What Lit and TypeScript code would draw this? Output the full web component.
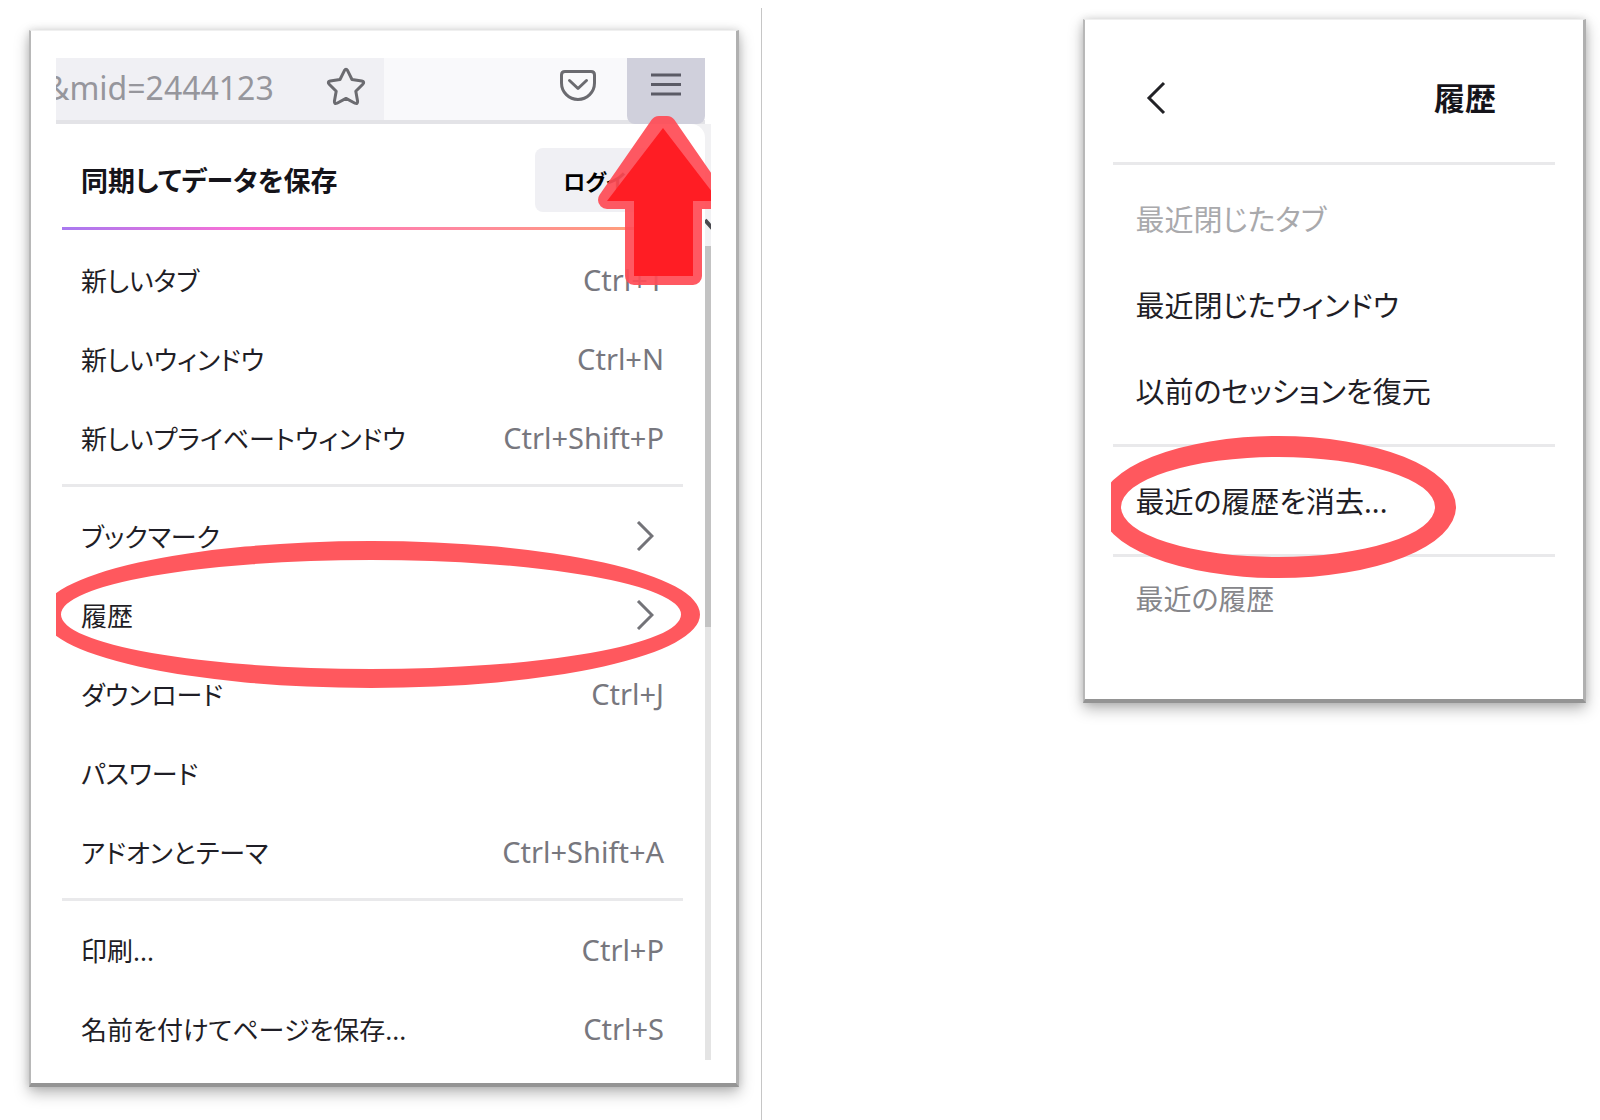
import { LitElement, html, css, nothing } from "lit";
import { customElement } from "lit/decorators.js";

interface MenuEntry {
  label: string;
  shortcut?: string;
  submenu?: boolean;
  ringed?: boolean;
}

const MENU_GROUPS: MenuEntry[][] = [
  [
    { label: "新しいタブ", shortcut: "Ctrl+T" },
    { label: "新しいウィンドウ", shortcut: "Ctrl+N" },
    { label: "新しいプライベートウィンドウ", shortcut: "Ctrl+Shift+P" },
  ],
  [
    { label: "ブックマーク", submenu: true },
    { label: "履歴", submenu: true, ringed: true },
    { label: "ダウンロード", shortcut: "Ctrl+J" },
    { label: "パスワード" },
    { label: "アドオンとテーマ", shortcut: "Ctrl+Shift+A" },
  ],
  [
    { label: "印刷...", shortcut: "Ctrl+P" },
    { label: "名前を付けてページを保存...", shortcut: "Ctrl+S" },
  ],
];

const shared = css`
  * {
    box-sizing: border-box;
  }
  button {
    font: inherit;
    color: inherit;
    background: none;
    border: 0;
    margin: 0;
    padding: 0;
    text-align: left;
    cursor: pointer;
  }
  svg {
    display: block;
    flex: none;
  }
  .card {
    background: #fff;
    border-style: solid;
    border-width: 1px 3px 4px 2px;
    border-color: #f0f0f0 #b0b0b0 #949494 #b8b8b8;
    box-shadow: 0 6px 14px rgba(0, 0, 0, 0.28), 0 0 8px rgba(0, 0, 0, 0.12);
  }
  .rule {
    height: 3px;
    border: 0;
    background: #e9e9eb;
  }
  .ring {
    position: absolute;
    z-index: 2;
    border-style: solid;
    border-color: #ff585e;
    border-radius: 50%;
    pointer-events: none;
  }
`;

@customElement("app-menu")
export class AppMenu extends LitElement {
  static styles = [
    shared,
    css`
      :host {
        display: block;
      }
      .card {
        padding: 27px 25px 23px 25px;
      }
      .panel {
        position: relative;
        overflow: hidden;
      }
      .toolbar {
        display: flex;
        height: 66px;
        margin-right: 6px;
        background: #f9f9fb;
        border-bottom: 4px solid #e3e3e7;
      }
      .address {
        display: flex;
        align-items: center;
        justify-content: space-between;
        flex: 0 1 328px;
        padding: 0 18px 4px 0;
        background: #f0f0f4;
        overflow: hidden;
      }
      .url {
        margin-left: -10px;
        font-size: 32px;
        color: #96969c;
      }
      .tools {
        display: flex;
        flex: 1;
        justify-content: flex-end;
        padding: 10px 30px 0 0;
      }
      .opener {
        position: relative;
        z-index: 3;
        flex: none;
        width: 78px;
      }
      .opener button {
        display: flex;
        justify-content: center;
        width: 100%;
        height: 66px;
        padding-top: 14px;
        background: #d0d0dc;
        border-radius: 0 0 8px 8px;
      }
      .arrow {
        position: absolute;
        top: 58px;
        left: -34px;
      }
      .body {
        display: flex;
        background: #f1f1f3;
      }
      .list {
        flex: 1;
        min-width: 0;
        background: #fff;
        border-radius: 0 14px 0 0;
      }
      .sync {
        display: flex;
        align-items: center;
        justify-content: space-between;
        height: 103px;
        padding: 8px 22px 0 25px;
      }
      .title {
        margin: 0;
        font-size: 27px;
        font-weight: 700;
        color: #15141a;
      }
      .login {
        width: 148px;
        height: 64px;
        padding-left: 28px;
        border-radius: 8px;
        background: #f0f0f4;
        font-size: 22px;
        font-weight: 700;
      }
      .accent {
        height: 3px;
        margin: 0 22px 10px 6px;
        background: linear-gradient(90deg, #a879f0, #f770d6 28%, #ff7fb0 50%, #ff9a80 88%, #ffb070);
      }
      .rule {
        margin: 7px 22px 9px 6px;
      }
      .slot {
        position: relative;
      }
      .slot.last {
        margin-bottom: -8px;
      }
      .row {
        display: flex;
        align-items: center;
        justify-content: space-between;
        width: 100%;
        height: 79px;
        padding: 0 41px 0 25px;
        font-size: 26px;
        color: #1f1e26;
      }
      .keys {
        font-size: 29px;
        color: #77777e;
      }
      .go {
        margin-right: 10px;
      }
      .ring {
        top: -34px;
        bottom: -34px;
        left: -14px;
        right: 5px;
        border-width: 19px;
      }
      .scroll {
        display: flex;
        flex-direction: column;
        flex: none;
        width: 6px;
        background: #e4e4e4;
      }
      .scroll .cap {
        height: 122px;
        background: #f1f1f3;
      }
      .scroll .cap svg {
        margin-top: 94px;
      }
      .scroll .thumb {
        height: 381px;
        background: #c3c3c3;
      }
    `,
  ];

  private entry(e: MenuEntry, last: boolean) {
    return html`<div class="slot ${last ? "last" : ""}">
      <button class="row">
        <span>${e.label}</span>
        ${e.shortcut ? html`<span class="keys">${e.shortcut}</span>` : nothing}
        ${e.submenu
          ? html`<svg class="go" width="18" height="30" viewBox="0 0 18 30" fill="none" stroke="#737378" stroke-width="3">
              <path d="M2 1 L16 15 L2 29" />
            </svg>`
          : nothing}
      </button>
      ${e.ringed ? html`<div class="ring"></div>` : nothing}
    </div>`;
  }

  render() {
    const lastGroup = MENU_GROUPS.length - 1;
    return html`<section class="card">
      <div class="panel">
        <div class="toolbar">
          <div class="address">
            <span class="url">&amp;mid=2444123</span>
            <svg width="40" height="40" viewBox="0 0 40 40" fill="none" stroke="#6b6b70" stroke-width="3" stroke-linejoin="round">
              <path d="M18.400 3.600 Q20 0.800 21.600 3.600 L26 12.500 L35.800 14 Q39 14.800 36.800 17.200 L29.800 24.200 L31.600 34.200 Q31.800 37.400 29 36.200 L20 31.400 L11 36.200 Q8.200 37.400 8.400 34.200 L10.200 24.200 L3.200 17.200 Q1 14.800 4.200 14 L14 12.500 Z" />
            </svg>
          </div>
          <div class="tools">
            <svg width="38" height="34" viewBox="0 0 38 34" fill="none" stroke="#6b6b70" stroke-width="3" stroke-linecap="round" stroke-linejoin="round">
              <path d="M6 3.500 H32 Q35.500 3.500 35.500 7 V15 A16.500 16.500 0 0 1 2.500 15 V7 Q2.500 3.500 6 3.500 Z" />
              <path d="M10.500 12.500 L19 20.500 L27.500 12.500" />
            </svg>
          </div>
          <div class="opener">
            <button aria-label="メニュー">
              <svg width="30" height="26" viewBox="0 0 30 26" stroke="#5b5b66" stroke-width="3">
                <path d="M0 3 H30 M0 12.500 H30 M0 22 H30" />
              </svg>
            </button>
            <svg class="arrow" width="140" height="176" viewBox="0 0 140 176">
              <path
                d="M66 9 H74 L126 84 V84 H100 V160 H41 V84 H14 Z"
                fill="#ff4d57"
                stroke="#ff4d57"
                stroke-width="18"
                stroke-linejoin="round"
                opacity="0.93"
              />
              <path d="M70 12 L126 85 H100 V160 H41 V85 H14 Z" fill="#ff1d24" />
            </svg>
          </div>
        </div>
        <div class="body">
          <div class="list">
            <div class="sync">
              <h2 class="title">同期してデータを保存</h2>
              <button class="login">ログイン</button>
            </div>
            <div class="accent"></div>
            ${MENU_GROUPS.map(
              (group, g) => html`${g > 0 ? html`<hr class="rule" />` : nothing}
              ${group.map((e, i) => this.entry(e, g === lastGroup && i === group.length - 1))}`
            )}
          </div>
          <div class="scroll">
            <div class="cap">
              <svg width="6" height="12" viewBox="0 0 6 12" fill="none" stroke="#4a4a4f" stroke-width="4">
                <path d="M0 2 L8 11" />
              </svg>
            </div>
            <div class="thumb"></div>
          </div>
        </div>
      </div>
    </section>`;
  }
}

@customElement("history-panel")
export class HistoryPanel extends LitElement {
  static styles = [
    shared,
    css`
      :host {
        display: block;
      }
      .card {
        padding: 0 25px 78px 26px;
      }
      .panel {
        position: relative;
        overflow: hidden;
      }
      .head {
        display: flex;
        align-items: center;
        justify-content: space-between;
        height: 131px;
        padding: 24px 62px 0 35px;
      }
      .title {
        margin: 0;
        font-size: 31px;
        line-height: 44px;
        font-weight: 700;
        color: #15141a;
      }
      .rule {
        margin: 11px 3px 10px 2px;
      }
      .slot {
        position: relative;
      }
      .row {
        display: flex;
        align-items: center;
        width: 100%;
        height: 86px;
        padding-left: 24px;
        font-size: 29px;
        color: #1f1e26;
      }
      .row:disabled {
        color: #a9a9ac;
        cursor: default;
      }
      .caption {
        margin: 0;
        padding: 10px 0 0 24px;
        font-size: 28px;
        font-weight: 400;
        line-height: 44px;
        color: #86868a;
      }
      .ring {
        top: -21px;
        bottom: -35px;
        left: -11px;
        width: 356px;
        border-width: 21px;
      }
    `,
  ];

  render() {
    return html`<section class="card">
      <div class="panel">
        <div class="head">
          <button aria-label="戻る">
            <svg width="20" height="34" viewBox="0 0 20 34" fill="none" stroke="#222226" stroke-width="3">
              <path d="M18 2 L3 17 L18 32" />
            </svg>
          </button>
          <h2 class="title">履歴</h2>
        </div>
        <hr class="rule" />
        <button class="row" disabled>最近閉じたタブ</button>
        <button class="row">最近閉じたウィンドウ</button>
        <button class="row">以前のセッションを復元</button>
        <hr class="rule" />
        <div class="slot">
          <button class="row">最近の履歴を消去...</button>
          <div class="ring"></div>
        </div>
        <hr class="rule" />
        <h3 class="caption">最近の履歴</h3>
      </div>
    </section>`;
  }
}

@customElement("app-root")
export class AppRoot extends LitElement {
  static styles = css`
    :host {
      display: block;
      min-height: 100vh;
      background: #fff;
      font-family: "Noto Sans", "Noto Sans CJK JP", sans-serif;
      font-feature-settings: "palt";
    }
    .page {
      box-sizing: border-box;
      display: grid;
      grid-template-columns: minmax(0, 762fr) minmax(0, 838fr);
      min-height: 100vh;
      padding-top: 8px;
    }
    .left {
      padding: 22px 22px 32px 29px;
      border-right: 1px solid #c6c6c6;
    }
    .right {
      display: flex;
      justify-content: flex-end;
      align-items: flex-start;
      padding: 11px 14px 0 0;
    }
    .history {
      flex: 0 1 61%;
    }
  `;

  render() {
    return html`<main class="page">
      <div class="left"><app-menu></app-menu></div>
      <div class="right"><history-panel class="history"></history-panel></div>
    </main>`;
  }
}
